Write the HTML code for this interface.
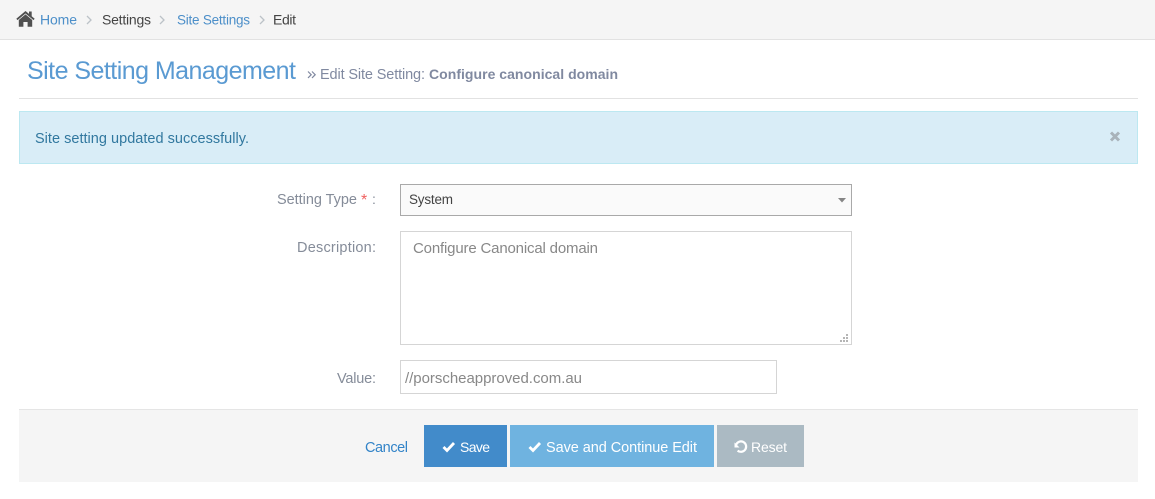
<!DOCTYPE html>
<html><head><meta charset="utf-8"><title>Site Setting Management</title>
<style>
html,body{margin:0;padding:0;width:1155px;height:499px;overflow:hidden;background:#fff}
svg{display:block}
text{font-family:"Liberation Sans",sans-serif;font-size:14px;white-space:pre}
</style></head><body>
<svg width="1155" height="499" viewBox="0 0 1155 499" xmlns="http://www.w3.org/2000/svg">
<rect x="0" y="0" width="1155" height="39" fill="#f5f5f5"/>
<rect x="0" y="39" width="1155" height="1" fill="#e2e2e2"/>
<path d="M16.3 18.7L25.5 11L29 13.9V11.5H31.7V16.2L34.7 18.7L33.5 20.1L25.5 13.5L17.5 20.1Z M18.8 20L25.5 14.4L32.2 20V26.7H27.6V22H23.4V26.7H18.8Z" fill="#505050"/>
<text x="40" y="24.5" fill="#4c8fc9" textLength="37">Home</text>
<path d="M87 16l4 4-4 4" fill="none" stroke="#bcc2c8" stroke-width="1.3"/>
<text x="102" y="24.5" fill="#444" textLength="49">Settings</text>
<path d="M160 16l4 4-4 4" fill="none" stroke="#bcc2c8" stroke-width="1.3"/>
<text x="177" y="24.5" fill="#4c8fc9" style="font-size:13.5px" textLength="73">Site Settings</text>
<path d="M260 16l4 4-4 4" fill="none" stroke="#bcc2c8" stroke-width="1.3"/>
<text x="273" y="24.5" fill="#444" textLength="23">Edit</text>

<text x="27" y="79" fill="#5a9ad2" style="font-size:25px" textLength="269">Site Setting Management</text>
<path d="M308 71.5l3.2 3.2-3.2 3.2M312 71.5l3.2 3.2-3.2 3.2" fill="none" stroke="#8089a0" stroke-width="1.2"/>
<text x="320" y="79" fill="#8089a0" style="font-size:14.5px" textLength="105">Edit Site Setting:</text>
<text x="429" y="79" fill="#8089a0" font-weight="bold" textLength="189">Configure canonical domain</text>
<rect x="19" y="98" width="1119" height="1" fill="#e2e2e2"/>

<rect x="19.5" y="111.5" width="1118" height="52" fill="#d9edf7" stroke="#bce8f1"/>
<text x="35" y="143" fill="#31789f" style="font-size:14.5px" textLength="214">Site setting updated successfully.</text>
<path d="M1111 132.5l8 8M1119 132.5l-8 8" stroke="#a9b3ba" stroke-width="3" fill="none"/>

<text x="277" y="204" fill="#858c99" style="font-size:14.5px" textLength="80">Setting Type</text>
<text x="361" y="205" fill="#f0605f" style="font-size:16px">*</text>
<text x="372" y="204" fill="#858c99">:</text>
<rect x="400.5" y="184.5" width="451" height="31" fill="#fafafa" stroke="#a9a9a9"/>
<text x="409" y="204" fill="#444" style="font-size:13.5px" textLength="44">System</text>
<path d="M838 198h8l-4 4.5z" fill="#858585"/>

<text x="297" y="252" fill="#858c99" style="font-size:14.5px" textLength="79">Description:</text>
<rect x="400.5" y="231.5" width="451" height="113" fill="#fff" stroke="#d5d5d5"/>
<text x="413" y="253" fill="#888" style="font-size:15px" textLength="185">Configure Canonical domain</text>
<g fill="#b5b5b5"><rect x="846" y="334" width="2" height="2"/><rect x="843" y="337" width="2" height="2"/><rect x="846" y="337" width="2" height="2"/><rect x="840" y="340" width="2" height="2"/><rect x="843" y="340" width="2" height="2"/><rect x="846" y="340" width="2" height="2"/></g>

<text x="337" y="383" fill="#858c99" style="font-size:14.5px" textLength="39">Value:</text>
<rect x="400.5" y="360.5" width="376" height="33" fill="#fff" stroke="#d5d5d5"/>
<text x="405" y="383" fill="#888" style="font-size:15px" textLength="177">//porscheapproved.com.au</text>

<rect x="19" y="409" width="1119" height="73" fill="#f5f5f5"/>
<rect x="19" y="409" width="1119" height="1" fill="#e5e5e5"/>
<text x="365" y="452" fill="#3384c8" style="font-size:14.5px" textLength="43">Cancel</text>
<rect x="424" y="425" width="83" height="42" fill="#428bca"/>
<path d="M443.5 447l3.5 3.5 7-7.5" fill="none" stroke="#fff" stroke-width="2.8"/>
<text x="460" y="452" fill="#fff" textLength="30">Save</text>
<rect x="510" y="425" width="204" height="42" fill="#6fb3e0"/>
<path d="M529.5 447l3.5 3.5 7-7.5" fill="none" stroke="#fff" stroke-width="2.8"/>
<text x="546" y="452" fill="#fff" style="font-size:14.5px" textLength="151">Save and Continue Edit</text>
<rect x="717" y="425" width="87" height="42" fill="#abbac3"/>
<path d="M736 445a5.2 5.2 0 1 1 1.6 5.6" fill="none" stroke="#fff" stroke-width="2.2"/>
<path d="M734.5 442.5v5h5z" fill="#fff"/>
<text x="751" y="452" fill="#fff" textLength="36">Reset</text>
</svg>
</body></html>
